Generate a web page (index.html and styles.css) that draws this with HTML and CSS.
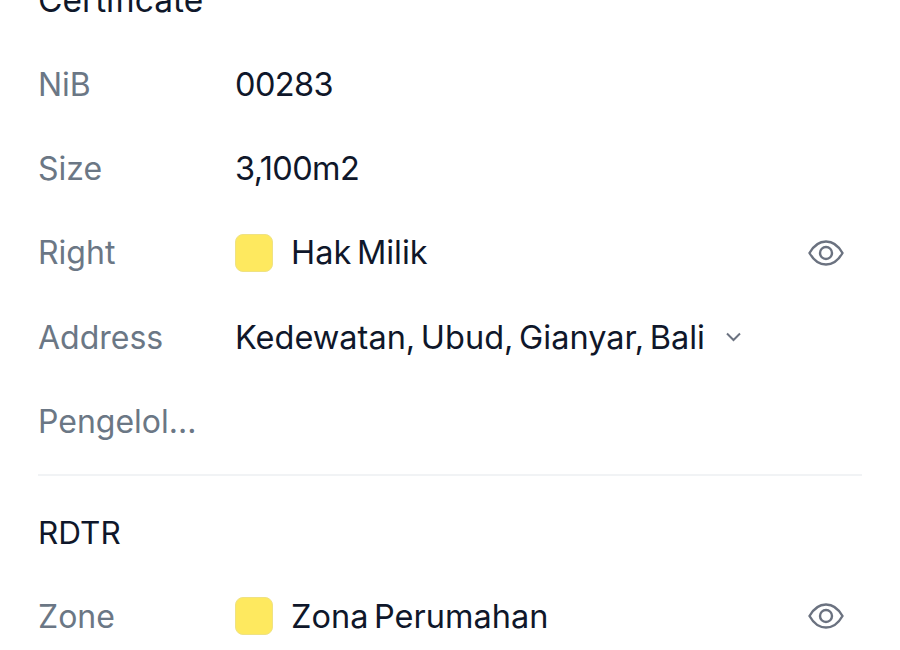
FILE: index.html
```html
<!DOCTYPE html>
<html>
<head>
  <title>Property Details</title>
  <link rel="stylesheet" href="styles.css">
</head>
<body>
  <div class="container">
    <h3 class="section-title first">Certificate</h3>
    <div class="row"><span class="label">NiB</span><span class="value num">00283</span></div>
    <div class="row"><span class="label">Size</span><span class="value num">3,100m2</span></div>
    <div class="row">
      <span class="label">Right</span>
      <span class="swatch"></span><span class="value">Hak Milik</span>
      <svg class="eye" viewBox="0 0 36 28" fill="none" stroke="#6b7280" stroke-width="2.4"><path d="M1.5 14C6 6 11 2.5 18 2.5S30 6 34.5 14C30 22 25 25.5 18 25.5S6 22 1.5 14z"/><circle cx="18" cy="14" r="6"/></svg>
    </div>
    <div class="row">
      <span class="label">Address</span>
      <span class="value">Kedewatan, Ubud, Gianyar, Bali</span>
      <svg class="chevron" viewBox="0 0 16 10" fill="none" stroke="#6b7280" stroke-width="2"><path d="M1.5 1.5L8 8l6.5-6.5"/></svg>
    </div>
    <div class="row"><span class="label">Pengelol...</span></div>
    <hr class="divider">
    <h3 class="section-title">RDTR</h3>
    <div class="row">
      <span class="label">Zone</span>
      <span class="swatch"></span><span class="value">Zona Perumahan</span>
      <svg class="eye" viewBox="0 0 36 28" fill="none" stroke="#6b7280" stroke-width="2.4"><path d="M1.5 14C6 6 11 2.5 18 2.5S30 6 34.5 14C30 22 25 25.5 18 25.5S6 22 1.5 14z"/><circle cx="18" cy="14" r="6"/></svg>
    </div>
  </div>
</body>
</html>
```

FILE: styles.css
```css
body {
  font-family: Inter, 'Noto Sans', sans-serif;
  background-color: #ffffff;
  margin: 0;
  padding: 0;
  height: 650px;
  overflow: hidden;
}

.container {
  padding: 0 38px;
  margin-top: -19px;
}

.section-title {
  margin: 0;
  padding: 37px 0 21px;
  line-height: 40px;
  font-size: 31.5px;
  font-weight: 400;
  color: #0f172a;
}

.section-title.first {
  padding: 0 0 23px;
  line-height: 38px;
  font-size: 33.5px;
}

.row {
  display: flex;
  align-items: center;
  height: 84.4px;
  font-size: 32px;
}

.label {
  width: 197px;
  flex-shrink: 0;
  color: #6b7785;
}

.value {
  color: #0f172a;
  font-size: 32.5px;
  word-spacing: -3.5px;
}

.value.num {
  letter-spacing: -0.6px;
}

.swatch {
  width: 38px;
  height: 38px;
  margin-right: 18px;
  background-color: #fee95f;
  border: 1px solid #efe283;
  border-radius: 8px;
  box-sizing: border-box;
}

.eye {
  width: 36px;
  height: 28px;
  margin-left: auto;
  margin-right: 18px;
}

.chevron {
  width: 17px;
  height: 10px;
  margin-left: 20px;
}

.divider {
  border: none;
  border-top: 2px solid #f1f3f5;
  margin: 10px 0 0;
}
```
